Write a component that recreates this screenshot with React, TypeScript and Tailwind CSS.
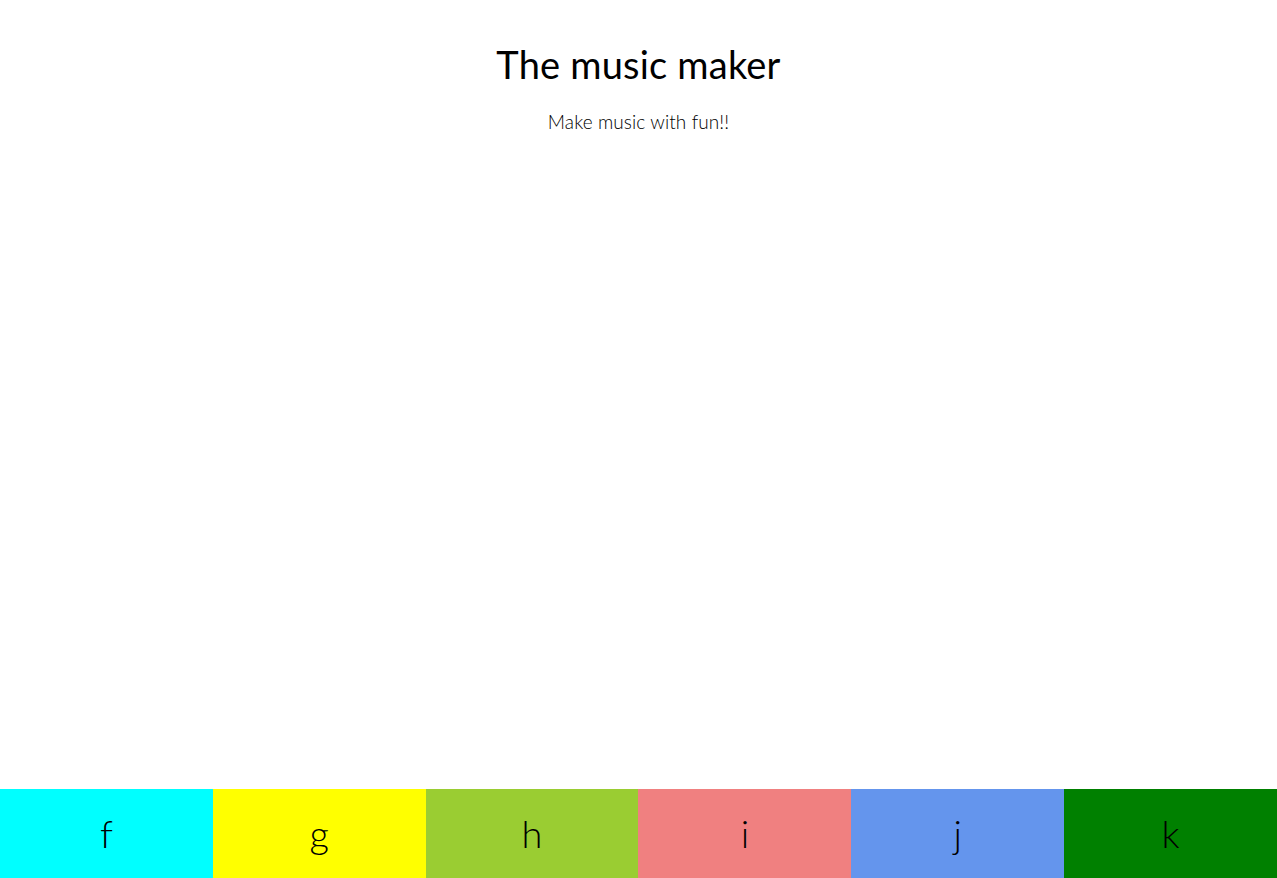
import React from 'react';

const keys = [
  { key: 'f', color: 'bg-[#00ffff]' },
  { key: 'g', color: 'bg-[#ffff00]' },
  { key: 'h', color: 'bg-[#9acd32]' },
  { key: 'i', color: 'bg-[#f08080]' },
  { key: 'j', color: 'bg-[#6495ed]' },
  { key: 'k', color: 'bg-[#008000]' },
];

export default function App() {
  return (
    <div className="flex min-h-screen flex-col bg-white text-black" style={{ fontFamily: 'Lato, "Noto Sans", sans-serif' }}>
      <header className="flex flex-col items-center pt-[39px]">
        <h1 className="text-[38px] font-normal leading-[50px] tracking-[0.2px]">The music maker</h1>
        <p className="mt-[21px] text-[19px] font-light leading-6 tracking-[0.1px]">Make music with fun!!</p>
      </header>

      <div className="mt-auto grid h-[89px] grid-cols-6">
        {keys.map((k) => (
          <button
            key={k.key}
            className={`flex items-center justify-center text-[38px] font-light ${k.color}`}
          >
            {k.key}
          </button>
        ))}
      </div>
    </div>
  );
}
